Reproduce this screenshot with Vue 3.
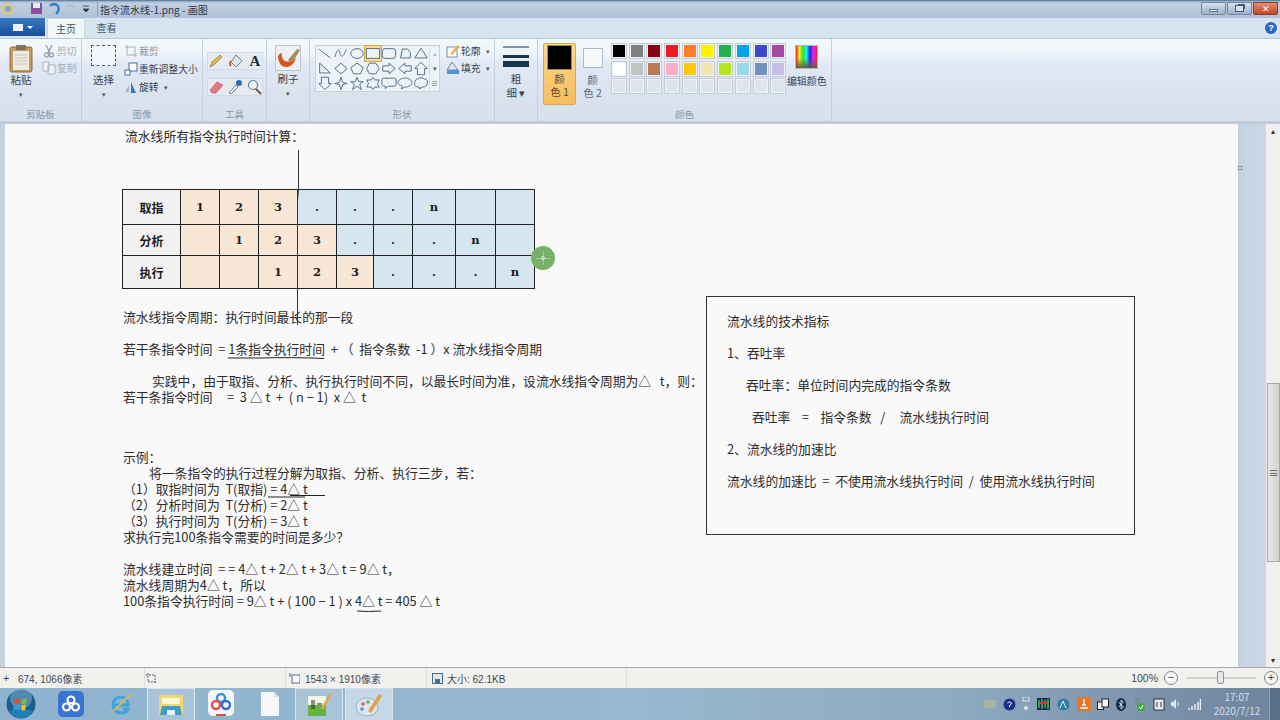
<script setup>
const palette1 = ['#000000','#7f7f7f','#880015','#ed1c24','#ff7f27','#fff200','#22b14c','#00a2e8','#3f48cc','#a349a4']
const palette2 = ['#ffffff','#c3c3c3','#b97a57','#ffaec9','#ffc90e','#efe4b0','#b5e61d','#99d9ea','#7092be','#c8bfe7']
const palette3 = Array(10).fill('#e0e5ec')
const shapes = [
  'M2 3L15 13','M2 12C5 2 7 3 8 8S12 12 15 3','','', '','M4 13L6 3H12L15 7V13Z','M9 2L16 13H2Z',
  'M3 2V13H15Z','M9 2L16 8L9 14L2 8Z','M9 2L16 7L13 14H5L2 7Z','M5 2H12L16 8L12 14H5L2 8Z','M2 5H9V2L16 8L9 14V11H2Z','M16 5H9V2L2 8L9 14V11H16Z','M5 15V8H2L9 1L16 8H13V15Z',
  'M5 1V8H2L9 15L16 8H13V1H5Z','M9 1L11 7L16 8L11 9L9 15L7 9L2 8L7 7Z','M9 1L11 6H16L12 9L14 15L9 11L4 15L6 9L2 6H7Z','M9 1L11 4H16L14 8L16 12H11L9 15L7 12H2L4 8L2 4H7Z','M3 2H15Q17 2 17 4V9Q17 11 15 11H8L5 14V11H3Q1 11 1 9V4Q1 2 3 2Z','M9 2C13 2 17 4 17 7S13 12 9 12L5 14L6 11C3 10 1 9 1 7C1 4 5 2 9 2Z','M5 3C7 1 11 1 13 3C16 3 17 6 16 8C16 11 13 12 11 12L7 14L7 12C3 12 1 10 2 7C2 5 3 3 5 3Z'
]
const cells = [
  {t:'取指',c:'head'},{t:'1',c:'or'},{t:'2',c:'or'},{t:'3',c:'or'},{t:'.',c:'bl'},{t:'.',c:'bl'},{t:'.',c:'bl'},{t:'n',c:'bl'},{t:'',c:'bl'},{t:'',c:'bl'},
  {t:'分析',c:'head'},{t:'',c:'or'},{t:'1',c:'or'},{t:'2',c:'or'},{t:'3',c:'or'},{t:'.',c:'bl'},{t:'.',c:'bl'},{t:'.',c:'bl'},{t:'n',c:'bl'},{t:'',c:'bl'},
  {t:'执行',c:'head'},{t:'',c:'or'},{t:'',c:'or'},{t:'1',c:'or'},{t:'2',c:'or'},{t:'3',c:'or'},{t:'.',c:'bl'},{t:'.',c:'bl'},{t:'.',c:'bl'},{t:'n',c:'bl'}
]
const lines = [
  {t:'流水线指令周期：执行时间最长的那一段'},{t:''},
  {t:'若干条指令时间  = 1条指令执行时间  + （  指令条数  -1 ）x 流水线指令周期'},{t:''},
  {t:'实践中，由于取指、分析、执行执行时间不同，以最长时间为准，设流水线指令周期为△   t，则：',c:'i1'},
  {t:'若干条指令时间     =  3 △ t  +  ( n − 1)  x △  t'},{t:''},{t:''},{t:''},
  {t:'示例：',c:'up'},
  {t:'将一条指令的执行过程分解为取指、分析、执行三步，若：',c:'i2'},
  {t:'（1）取指时间为  T(取指) = 4△ t'},
  {t:'（2）分析时间为  T(分析) = 2△ t'},
  {t:'（3）执行时间为  T(分析) = 3△ t'},
  {t:'求执行完100条指令需要的时间是多少？'},{t:''},
  {t:'流水线建立时间  = = 4△ t + 2△ t + 3△ t = 9△ t，'},
  {t:'流水线周期为4△ t，所以'},
  {t:'100条指令执行时间 = 9△ t + ( 100 − 1 ) x 4△ t = 405 △ t'}
]
const boxLines = [
  {t:'流水线的技术指标'},{t:'1、吞吐率'},{t:'吞吐率：单位时间内完成的指令条数',c:'b1'},
  {t:'吞吐率    =    指令条数   /     流水线执行时间',c:'b2'},{t:'2、流水线的加速比'},
  {t:'流水线的加速比  =  不使用流水线执行时间  /  使用流水线执行时间'}
]
</script>

<template>
  <div class="win">
    <header class="title">
      <svg class="qa" width="92" height="18" viewBox="0 0 92 18">
        <circle cx="6" cy="9" r="6" fill="#d9c98e"/><circle cx="6" cy="9" r="3" fill="#7fa8c9"/>
        <rect x="29" y="3" width="11" height="11" fill="#8a4f9e"/><rect x="31" y="3" width="7" height="5" fill="#e8e8f2"/>
        <path d="M48 6Q52 2 56 6Q58 10 54 14" fill="none" stroke="#2f7fc7" stroke-width="2.4"/>
        <path d="M64 7Q68 3 72 8" fill="none" stroke="#aebccd" stroke-width="2"/>
        <path d="M81 6h6M81 9h6l-3 3z" fill="#2c3a4c" stroke="#2c3a4c" stroke-width=".8"/>
      </svg>
      <span class="sep"></span>
      <span class="title-text">指令流水线-1.png - 画图</span>
      <div class="wbtns">
        <span class="wb"><i class="mn"></i></span>
        <span class="wb"><i class="mx"></i></span>
        <span class="wb close">✕</span>
      </div>
    </header>

    <nav class="tabs">
      <span class="menu-btn"><i></i><b></b></span>
      <span class="tab active">主页</span>
      <span class="tab">查看</span>
      <span class="help">?</span>
    </nav>

    <section class="ribbon">
      <div class="group g-clip">
        <div class="gbody">
          <div class="big">
            <svg width="26" height="30" viewBox="0 0 26 30"><rect x="2" y="4" width="22" height="25" rx="2" fill="#c79a62" stroke="#8a6a44"/><rect x="5" y="8" width="16" height="19" fill="#efeae0"/><path d="M7 12h12M7 15h12M7 18h12M7 21h12" stroke="#c9c5bb"/><rect x="8" y="2" width="10" height="5" rx="1" fill="#7d7468"/></svg>
            <span>粘贴</span><em>▾</em>
          </div>
          <div class="stack dim">
            <div class="row"><svg width="14" height="14" viewBox="0 0 14 14"><path d="M4 1L8 9M10 1L6 9" stroke="#9aa3ad" stroke-width="1.4"/><circle cx="4.500" cy="11" r="2" fill="none" stroke="#9aa3ad" stroke-width="1.300"/><circle cx="9.500" cy="11" r="2" fill="none" stroke="#9aa3ad" stroke-width="1.300"/></svg>剪切</div>
            <div class="row"><svg width="14" height="14" viewBox="0 0 14 14"><path d="M1 1h6v9H1zM6 4h7v9H6z" fill="#eef1f5" stroke="#aab2bc"/></svg>复制</div>
          </div>
        </div>
        <label>剪贴板</label>
      </div>
      <div class="group g-img">
        <div class="gbody">
          <div class="big sel">
            <div class="dash"></div>
            <span>选择</span><em>▾</em>
          </div>
          <div class="stack">
            <div class="row dimr"><svg width="14" height="14" viewBox="0 0 14 14"><path d="M3 1V11H13M1 3H11V13" fill="none" stroke="#a4adb8"/></svg>裁剪</div>
            <div class="row"><svg width="14" height="14" viewBox="0 0 14 14"><rect x="5" y="1" width="8" height="8" fill="#fff" stroke="#3c6ea5"/><rect x="1" y="8" width="5" height="5" fill="#fff" stroke="#3c6ea5"/></svg>重新调整大小</div>
            <div class="row"><svg width="14" height="14" viewBox="0 0 14 14"><path d="M7 2L12 13H7Z" fill="#3c78c0"/><path d="M5 5L1 12H5Z" fill="#a9b9c9"/></svg>旋转<em class="inl">▾</em></div>
          </div>
        </div>
        <label>图像</label>
      </div>
      <div class="group g-tools">
        <div class="gbody toolgrid">
          <div class="tool-row">
            <svg width="16" height="16" viewBox="0 0 16 16"><path d="M2 14L4 9L12 2L14 4L6 12Z" fill="#e5b84d" stroke="#8a7a4c" stroke-width=".7"/></svg>
            <svg width="16" height="16" viewBox="0 0 16 16"><path d="M8 2L14 8L8 14L3 9Z" fill="#dfe6ee" stroke="#6b8096"/><path d="M3 8Q1 11 3 13" stroke="#d2622a" stroke-width="2" fill="none"/></svg>
            <span class="a">A</span>
          </div>
          <div class="tool-row">
            <svg width="16" height="16" viewBox="0 0 16 16"><path d="M2 11L9 3L15 6L8 14H4Z" fill="#e67a84" stroke="#b05a60" stroke-width=".7"/></svg>
            <svg width="16" height="16" viewBox="0 0 16 16"><path d="M2 14L9 6L11 8L4 15Z" fill="#e4eef6" stroke="#4d6f8e" stroke-width=".8"/><circle cx="12" cy="4" r="3" fill="#2f6db0"/></svg>
            <svg width="16" height="16" viewBox="0 0 16 16"><circle cx="7" cy="6" r="4.500" fill="#eef4fa" stroke="#6c7e90" stroke-width="1.200"/><path d="M10 10L15 15" stroke="#6b5a44" stroke-width="2"/></svg>
          </div>
        </div>
        <label>工具</label>
      </div>
      <div class="group g-brush">
        <div class="gbody">
          <div class="big brush">
            <svg width="26" height="26" viewBox="0 0 26 26"><rect x=".5" y=".5" width="25" height="25" fill="#eef0f2" stroke="#bcc5ce"/><path d="M3 12Q4 23 13 22Q19 20 21 13Q16 18 10 16Q6 14 7 8Q3 9 3 12Z" fill="#d8521c"/><path d="M13 15L23 3L25 5L17 18Z" fill="#a98a5c"/><path d="M22 4L24 2L25 4L24 5Z" fill="#dfe6ee"/></svg>
            <span>刷子</span><em>▾</em>
          </div>
        </div>
        <label class="hidden">刷子</label>
      </div>
      <div class="group g-shape">
        <div class="gbody shapes-wrap">
          <div class="gallery">
            <div class="shapes">
              <span v-for="(d,i) in shapes" :key="i" class="shape" :class="{on:i===3}">
                <svg width="16" height="15" viewBox="0 0 18 16">
                  <ellipse v-if="i===2" cx="9" cy="8" rx="7" ry="5.500" fill="none" stroke="#50708e" stroke-width="1.100"/>
                  <rect v-else-if="i===3" x="1.500" y="2.500" width="15" height="11" fill="#eef4fa" stroke="#50708e" stroke-width="1.100"/>
                  <rect v-else-if="i===4" x="1.500" y="2.500" width="15" height="11" rx="3" fill="none" stroke="#50708e" stroke-width="1.100"/>
                  <path v-else :d="d" fill="none" stroke="#50708e" stroke-width="1.100"/>
                </svg>
              </span>
            </div>
            <div class="gscroll"><i>▴</i><i class="d">▾</i><i class="d">≡</i></div>
          </div>
          <div class="stack outl">
            <div class="row"><svg width="14" height="14" viewBox="0 0 14 14"><rect x="1" y="3" width="10" height="10" fill="#fff" stroke="#7a93ab"/><path d="M4 10L12 1L14 3L6 11Z" fill="#e0b04a"/></svg>轮廓<em class="inl">▾</em></div>
            <div class="row"><svg width="14" height="14" viewBox="0 0 14 14"><path d="M6 1L12 9H1Z" fill="#dce7f1" stroke="#6e8aa4"/><path d="M1 9H13V13H1Z" fill="#4d92d1"/></svg>填充<em class="inl">▾</em></div>
          </div>
        </div>
        <label>形状</label>
      </div>
      <div class="group g-size">
        <div class="gbody weights">
          <div class="w-lines"><i class="w1"></i><i class="w2"></i><i class="w3"></i></div>
          <span>粗</span><span>细 ▾</span>
        </div>
        <label class="hidden">粗细</label>
      </div>
      <div class="group g-color">
        <div class="gbody colors">
          <div class="col1"><div class="swatch black"></div><span>颜</span><span>色 1</span></div>
          <div class="col2"><div class="swatch white"></div><span>颜</span><span>色 2</span></div>
          <div class="pal">
            <span v-for="(c,i) in palette1.concat(palette2,palette3)" :key="i" class="chip"><i :style="{background:c}"></i></span>
          </div>
          <div class="edit">
            <div class="rainbow"></div>
            <span>编辑颜色</span>
          </div>
        </div>
        <label>颜色</label>
      </div>
      <div class="group g-fill"></div>
    </section>

    <main class="work">
      <div class="gutter"></div>
      <div class="doc">
        <div class="left">
          <div class="ln first">流水线所有指令执行时间计算：</div>
          <div class="tbl">
            <span v-for="(c,i) in cells" :key="i" class="cell" :class="c.c">{{ c.t }}</span>
          </div>
          <div class="lines">
            <div v-for="(l,i) in lines" :key="i" class="ln" :class="l.c">{{ l.t }}</div>
          </div>
        </div>
        <aside class="box">
          <div v-for="(l,i) in boxLines" :key="i" class="ln bl-line" :class="l.c">{{ l.t }}</div>
        </aside>
        <svg class="ink" width="1233" height="544" viewBox="5 124 1233 544">
          <path d="M298.500 150V190L297.500 200V325" fill="none" stroke="#333" stroke-width="1"/>
          <path d="M228 358H262Q290 357 324 358.500M268 497H305M290 495.500H325M357 611Q368 612 381 611" fill="none" stroke="#222" stroke-width="1"/>
        </svg>
        <div class="cursor"><i></i><b></b><u></u></div>
      </div>
      <div class="band"><i class="grip"></i></div>
      <div class="scroll">
        <em>▴</em>
        <div class="thumb"><span>≡</span></div>
        <em class="down">▾</em>
      </div>
    </main>

    <footer class="status">
      <div class="st s1"><span class="plus">+</span>674, 1066像素</div>
      <div class="st s2"><svg width="11" height="11" viewBox="0 0 11 11"><path d="M2 0V9H11M0 2H9V11" fill="none" stroke="#56677a" stroke-dasharray="2 1"/></svg></div>
      <div class="st s3"><svg width="11" height="11" viewBox="0 0 11 11"><rect x="3" y="2" width="8" height="8" fill="#fff" stroke="#4b6d8e"/><path d="M1 0V4" stroke="#4b6d8e"/></svg>1543 × 1910像素</div>
      <div class="st s4"><svg width="11" height="11" viewBox="0 0 11 11"><rect x=".5" y=".5" width="10" height="10" fill="#dce7f1" stroke="#4b6d8e"/><rect x="3" y="6" width="5" height="4" fill="#4b6d8e"/></svg>大小: 62.1KB</div>
      <div class="zoomer">
        <span class="pct">100%</span>
        <span class="round">−</span>
        <div class="track"><i></i></div>
        <span class="round">+</span>
      </div>
    </footer>

    <div class="taskbar">
      <div class="start"><svg width="30" height="30" viewBox="0 0 30 30"><circle cx="15" cy="15" r="14.500" fill="#1e5c8c"/><circle cx="15" cy="9" r="11" fill="#8ac0dc" opacity=".45"/><path d="M15 29A14 14 0 0 0 27 22Q15 18 3 22A14 14 0 0 0 15 29Z" fill="#1f8fc9" opacity=".7"/><path d="M9 10Q11 9 14 10V15Q11 14 8 15Z" fill="#e2522a"/><path d="M15.500 10Q18 11 21 9L20 14Q18 16 15.500 15Z" fill="#7ebd3e"/><path d="M8 16Q11 15 14 16V21Q11 20 7 21Z" fill="#3f9fdc"/><path d="M15.500 16Q18 17 20 15L19 21Q17 22 15.500 21Z" fill="#f4c32c"/></svg></div>
      <div class="tk"><svg width="26" height="26" viewBox="0 0 26 26"><rect width="26" height="26" rx="5" fill="#3a74d2"/><circle cx="13" cy="9" r="3.500" fill="none" stroke="#fff" stroke-width="2.200"/><circle cx="8.500" cy="16" r="3.500" fill="none" stroke="#fff" stroke-width="2.200"/><circle cx="17.500" cy="16" r="3.500" fill="none" stroke="#fff" stroke-width="2.200"/></svg></div>
      <div class="tk"><svg width="26" height="26" viewBox="0 0 26 26"><path d="M6 14H20C20 8 16 6 13 6C8 6 5 10 5 14C5 19 9 22 13 22C16 22 19 21 20 18H15" fill="none" stroke="#3aa6e0" stroke-width="3"/><path d="M3 22C7 19 19 6 24 3" fill="none" stroke="#e8b93a" stroke-width="1.500"/></svg></div>
      <div class="tk act"><svg width="28" height="26" viewBox="0 0 28 26"><rect x="2" y="3" width="24" height="20" fill="#f3d774"/><rect x="5" y="6" width="18" height="6" fill="#fff7d0"/><path d="M5 14H23L25 23H3Z" fill="#3c9cc7"/><rect x="10" y="18" width="8" height="5" fill="#e9f1f6"/></svg></div>
      <div class="tk"><svg width="26" height="28" viewBox="0 0 26 28"><rect width="26" height="26" rx="5" fill="#f5f8fb"/><circle cx="13" cy="8" r="4" fill="none" stroke="#3b8fdc" stroke-width="2.400"/><circle cx="8" cy="15" r="4" fill="none" stroke="#e24e4e" stroke-width="2.400"/><circle cx="18" cy="15" r="4" fill="none" stroke="#2f6fd0" stroke-width="2.400"/><rect x="8" y="24" width="10" height="2" fill="#e24e4e"/></svg></div>
      <div class="tk file"><svg width="20" height="26" viewBox="0 0 20 26"><path d="M1 1H14L19 6V25H1Z" fill="#f6f7f8"/><path d="M14 1V6H19" fill="#d8dde2"/></svg></div>
      <div class="tk act"><svg width="26" height="26" viewBox="0 0 26 26"><rect x="2" y="4" width="18" height="20" fill="#f2f6ea"/><rect x="2" y="13" width="18" height="11" fill="#65b33e"/><path d="M6 8V17M8 8V17M11 12H16" stroke="#222"/><path d="M15 16L24 1L26 2L17 18Z" fill="#e2a93b"/></svg></div>
      <div class="tk act light"><svg width="28" height="26" viewBox="0 0 28 26"><ellipse cx="12" cy="15" rx="11" ry="9" fill="#dbe6ee" stroke="#9fb2c2"/><circle cx="8" cy="12" r="1.800" fill="#e25a5a"/><circle cx="13" cy="10" r="1.800" fill="#62b16a"/><circle cx="7" cy="17" r="1.800" fill="#4d92d1"/><path d="M13 19L24 2L27 4L16 21Z" fill="#dfa143"/></svg></div>
      <div class="tray">
        <svg width="12" height="8" viewBox="0 0 12 8"><rect width="12" height="8" fill="#a7b3a8"/></svg>
        <svg width="13" height="13" viewBox="0 0 13 13"><circle cx="6.500" cy="6.500" r="6" fill="#1e2e8c"/><path d="M4.500 5Q6.500 2.500 8.500 5Q8 7 6.500 7.500V9" fill="none" stroke="#fff"/></svg>
        <svg width="8" height="14" viewBox="0 0 8 14"><rect x="1" y="0" width="6" height="4" fill="none" stroke="#dfe6ec"/><circle cx="4" cy="11" r="2" fill="#dfe6ec"/></svg>
        <svg width="13" height="12" viewBox="0 0 13 12"><rect width="13" height="12" fill="#1a2a4a"/><path d="M2 2V10M5 1V11M8 2V10M11 1V11" stroke="#3fbf5f" stroke-width="1.500"/><path d="M3 5H10" stroke="#d33" stroke-width="2"/></svg>
        <svg width="13" height="13" viewBox="0 0 13 13"><circle cx="6.500" cy="6.500" r="6" fill="#2c7ea6"/><path d="M3 10L6 3L9 10" fill="none" stroke="#e6f3fa"/></svg>
        <svg width="14" height="14" viewBox="0 0 14 14"><rect width="14" height="14" fill="#e4762a"/><path d="M3 11H11M5 8H9M7 2V8" stroke="#fff" stroke-width="1.300"/></svg>
        <svg width="12" height="12" viewBox="0 0 12 12"><rect x="0.500" y="4" width="6" height="7.500" fill="#f1f4f6" stroke="#222"/><rect x="5" y="1" width="6.500" height="8" fill="#f1f4f6" stroke="#222"/></svg>
        <svg width="10" height="13" viewBox="0 0 10 13"><ellipse cx="5" cy="6.500" rx="5" ry="6.500" fill="#12264e"/><path d="M2.500 4L7.500 9L5 11V2L7.500 4L2.500 9" fill="none" stroke="#fff" stroke-width=".8"/></svg>
        <svg width="13" height="13" viewBox="0 0 13 13"><rect x="2" y="0" width="4" height="8" rx="1" fill="#7d8b98"/><circle cx="8" cy="9" r="4" fill="#3fa83f"/><path d="M6 9L8 11L10 7" fill="none" stroke="#fff"/></svg>
        <svg width="12" height="13" viewBox="0 0 12 13"><rect x="1" y="1" width="10" height="11" fill="#e6edf2" stroke="#333"/><path d="M4 4V9M8 4V9" stroke="#333"/></svg>
        <svg width="10" height="12" viewBox="0 0 10 12"><path d="M0 4H2L5 1V11L2 8H0Z" fill="#dfe6ec"/><path d="M7 4Q8 6 7 8" fill="none" stroke="#dfe6ec"/></svg>
        <svg width="13" height="11" viewBox="0 0 13 11"><path d="M1 11V9M4 11V7M7 11V5M10 11V3M12.500 11V0" stroke="#eef2f6" stroke-width="1.500"/></svg>
      </div>
      <div class="clock"><span>17:07</span><span>2020/7/12</span></div>
      <div class="desk"></div>
    </div>
  </div>
</template>

<style>
html, body { margin: 0; padding: 0; background: #f8f8f8; }
</style>

<style scoped>
.win { width: 1280px; height: 720px; overflow: hidden; display: flex; flex-direction: column; font-family: "Noto Sans CJK SC", "Liberation Sans", sans-serif; color: #333; }
.title { height: 18px; flex: none; display: flex; align-items: center; padding-left: 2px; box-sizing: border-box; background: linear-gradient(#40607f 0, #8ba5c2 1px, #c0cfe2 3px, #afc1d8 100%); position: relative; }
.qa { flex: none; }
.sep { width: 1px; height: 14px; background: #8b9cb0; margin: 0 2px 0 3px; }
.title-text { font-size: 10px; color: #2b3644; }
.wbtns { margin-left: auto; display: flex; gap: 1px; margin-right: 2px; align-self: flex-start; margin-top: 2px; }
.wb { width: 25px; height: 13px; border: 1px solid #73869b; box-sizing: border-box; border-radius: 0 0 2px 2px; background: linear-gradient(#d3e0ec, #9db2c8); display: flex; align-items: center; justify-content: center; }
.wb.close { background: linear-gradient(#e88e6e, #c1452c); color: #fff; font-size: 9px; border-color: #7c4030; }
.mn { width: 9px; height: 3px; background: #f1f4f8; border: 1px solid #5d6f82; box-sizing: border-box; margin-top: 3px; }
.mx { width: 9px; height: 7px; border: 1px solid #46586a; box-sizing: border-box; box-shadow: 2px -2px 0 -1px #46586a; background: #d7e1ec; }
.tabs { height: 20px; flex: none; display: flex; align-items: flex-end; background: #d5e4ef; position: relative; }
.menu-btn { width: 45px; height: 18px; margin-right: 2px; background: linear-gradient(#3a7bc0, #164f9c); display: flex; align-items: center; justify-content: center; gap: 4px; align-self: flex-start; }
.menu-btn i { width: 10px; height: 7px; background: #eef3f8; }
.menu-btn b { width: 0; height: 0; border: 3px solid transparent; border-top-color: #fff; margin-top: 3px; }
.tab { width: 37px; height: 20px; line-height: 20px; text-align: center; font-size: 10px; color: #40566c; margin-right: 3px; box-sizing: border-box; }
.tab.active { width: 38px; background: #f1f7f9; color: #3a4e5a; border: 1px solid #c8d6e0; border-bottom: 0; line-height: 19px; }
.help { position: absolute; right: 3px; top: 4px; width: 12px; height: 12px; border-radius: 50%; background: #2f66c4; color: #fff; font: bold 9px/12px "Liberation Sans", sans-serif; text-align: center; }
.ribbon { height: 86px; flex: none; display: flex; box-sizing: border-box; background: linear-gradient(#f2f9fa 0, #eef4fa 15px, #e1e8f6 25px, #d7e2ec 65px, #d8e2ef 100%); border-top: 1px solid #b9c8d4; border-bottom: 3px solid #c2ccd8; }
.group { position: relative; display: flex; flex-direction: column; box-sizing: border-box; border-right: 1px solid #c3d0df; font-size: 10px; color: #39434f; }
.group label { height: 13px; line-height: 13px; text-align: center; font-size: 9.500px; color: #8796a6; flex: none; }
.group label.hidden { visibility: hidden; }
.gbody { flex: 1; display: flex; min-height: 0; }
.g-clip { width: 82px; } .g-img { width: 121px; } .g-tools { width: 64px; } .g-brush { width: 43px; } .g-shape { width: 185px; } .g-size { width: 43px; } .g-color { width: 294px; } .g-fill { flex: 1; border-right: 0; }
.big { display: flex; flex-direction: column; align-items: center; line-height: 14px; font-size: 10.500px; }
.big em { font-size: 7px; font-style: normal; color: #555; line-height: 10px; margin-top: 2px; }
.g-clip .big { width: 42px; padding-top: 4px; }
.stack { display: flex; flex-direction: column; gap: 3px; padding-top: 5px; }
.stack .row { display: flex; align-items: center; gap: 1px; height: 14px; line-height: 14px; white-space: nowrap; font-size: 9.800px; }
.g-img .stack { gap: 4px; }
.dim { color: #a6aeb8; }
.dimr { color: #8c98a6; }
.inl { font-style: normal; font-size: 7px; color: #555; margin-left: 4px; }
.g-img .big { width: 42px; padding: 6px 0 0 1px; box-sizing: border-box; }
.dash { width: 23px; height: 19px; border: 1px dashed #4b5d70; background: #f3f7fb; margin-bottom: 7px; }
.toolgrid { flex-direction: column; gap: 10px; padding: 14px 0 0 5px; }
.tool-row { width: 54px; height: 16px; display: flex; justify-content: space-between; background: #e6ebf3; outline: 1px solid #d2dae4; }
.a { font: bold 15px/16px "Liberation Serif", serif; color: #1d2a38; width: 14px; text-align: center; }
.g-brush .big { width: 43px; padding-top: 6px; }
.g-brush .big span { margin-top: 1px; }
.shapes-wrap { padding: 6px 0 0 5px; gap: 6px; }
.gallery { width: 125px; height: 47px; display: flex; border: 1px solid #c6d1dd; box-sizing: border-box; background: #eef3f9; }
.shapes { flex: 1; display: grid; grid-template-columns: repeat(7, 16px); grid-auto-rows: 15px; align-content: center; justify-content: center; }
.shape { display: flex; align-items: center; justify-content: center; width: 16px; height: 15px; box-sizing: border-box; }
.shape.on { outline: 1px solid #d9a83f; background: #fbdc95; }
.gscroll { width: 9px; display: flex; flex-direction: column; border-left: 1px solid #d6dee7; }
.gscroll i { flex: 1; font-size: 7px; line-height: 15px; text-align: center; font-style: normal; color: #b5bdc7; }
.gscroll i.d { color: #4c5a68; }
.outl { gap: 3px; padding-top: 0; margin-top: -1px; }
.weights { flex-direction: column; align-items: center; font-size: 10.500px; line-height: 14px; padding-top: 7px; }
.w-lines { width: 26px; display: flex; flex-direction: column; margin-bottom: 5px; }
.w-lines i { background: #17354f; }
.w1 { height: 2px; background: #7c95a6 !important; margin-bottom: 7px; }
.w2 { height: 3px; margin-bottom: 3px; }
.w3 { height: 6px; }
.colors { padding: 4px 0 0 5px; }
.col1 { width: 33px; height: 62px; background: linear-gradient(#fbd88a, #f7bd5e); border: 1px solid #d7a957; box-sizing: border-box; border-radius: 2px; display: flex; flex-direction: column; align-items: center; font-size: 10.500px; line-height: 13px; color: #5b4a2c; }
.swatch { box-sizing: border-box; flex: none; }
.black { width: 23px; height: 23px; background: #000; margin: 2px 0 3px; outline: 1px solid #a08a5c; }
.col2 { width: 33px; display: flex; flex-direction: column; align-items: center; font-size: 10.500px; line-height: 13px; color: #5a6a7a; }
.white { width: 20px; height: 20px; background: #f8f8fa; border: 1px solid #b0bac6; margin: 5px 0 5px; }
.pal { margin-left: 2px; display: grid; grid-template-columns: repeat(10, 17.700px); grid-auto-rows: 17.500px; height: 54px; }
.chip { width: 16px; height: 16px; border: 1px solid #c5ced8; box-sizing: border-box; padding: 1px; background: #eef2f6; }
.chip i { display: block; width: 100%; height: 100%; }
.edit { margin-left: -4px; width: 46px; display: flex; flex-direction: column; align-items: center; font-size: 10px; white-space: nowrap; line-height: 14px; }
.rainbow { width: 21px; height: 22px; border: 1px solid #b0b8c0; margin: 2px 0 5px; background: linear-gradient(#8b6a6a00 55%, #6b5a44 100%), linear-gradient(90deg, #e22, #ee2, #2e2, #2ee, #22e, #e2e, #e22); }
.work { flex: 1; min-height: 0; display: flex; border-bottom: 1px solid #a5a8ab; }
.gutter { width: 5px; flex: none; background: #c6d4e1; }
.doc { width: 1233px; flex: none; position: relative; display: flex; background: #f9f9f9; box-sizing: border-box; padding-left: 118px; }
.left { width: 583px; flex: none; }
.ln { height: 16px; line-height: 16px; font-size: 12.800px; color: #2c2c2c; white-space: pre; }
.first { margin-top: 4px; margin-left: 2px; }
.tbl { margin-top: 45px; margin-left: -1px; width: 413px; height: 100px; display: grid; grid-template-columns: 58px 39px 39px 39px 39px 37px 39px 43px 40px 39px; grid-template-rows: 35px 31px 33px; border-top: 1px solid #222; border-left: 1px solid #222; box-sizing: border-box; }
.cell { border-right: 1px solid #222; border-bottom: 1px solid #222; display: flex; align-items: center; justify-content: center; font: bold 11.500px "DejaVu Serif", serif; color: #1c1c1c; }
.cell.head { background: #f1f1f1; font: bold 12px "Noto Sans CJK SC", sans-serif; }
.cell.or { background: #f8e7d7; }
.cell.bl { background: #d6e6f1; }
.lines { margin-top: 20px; }
.i1 { padding-left: 29px; }
.i2 { padding-left: 26px; }
.up { margin-top: -4px; }
.box { width: 429px; height: 239px; margin-top: 172px; box-sizing: border-box; border: 1px solid #333; padding: 16px 0 0 20px; background: #f9f9f9; flex: none; }
.bl-line { margin-bottom: 16px; }
.b1 { padding-left: 19px; }
.b2 { padding-left: 25px; }
.ink { position: absolute; left: 0; top: 0; pointer-events: none; }
.cursor { position: absolute; left: 526px; top: 122px; width: 24px; height: 24px; border-radius: 50%; background: #78b06a; }
.cursor i { position: absolute; left: 11.500px; top: 5px; width: 1px; height: 14px; background: #a9cba0; }
.cursor b { position: absolute; top: 11.500px; left: 5px; height: 1px; width: 14px; background: #a9cba0; }
.cursor u { position: absolute; left: 10px; top: 10px; width: 2px; height: 2px; border: 1px solid #dfe8da; border-radius: 50%; }
.band { width: 28px; flex: none; position: relative; background: linear-gradient(90deg, #c1d0e0 0, #c5d5e2 6px, #cad7e6 100%); }
.grip { position: absolute; left: 0; top: 42px; width: 4px; height: 4px; background: #f3f5f7; border: 1px solid #7f8a96; box-sizing: border-box; }
.scroll { width: 14px; flex: none; background: #f0f0ee; position: relative; display: flex; flex-direction: column; align-items: center; }
.scroll em { font-style: normal; font-size: 8px; line-height: 14px; color: #333; }
.scroll em.down { margin-top: auto; }
.thumb { position: absolute; left: 1px; right: 0; top: 259px; height: 179px; background: linear-gradient(90deg, #e7e7e7, #d2d2d2); border: 1px solid #a8a8a8; box-sizing: border-box; display: flex; align-items: center; justify-content: center; font-size: 10px; color: #555; }
.status { height: 20px; flex: none; display: flex; align-items: center; background: #f2f1ee; font-family: "Liberation Sans", "Noto Sans CJK SC", sans-serif; font-size: 10px; color: #3d4a58; box-sizing: border-box; }
.st { height: 100%; display: flex; align-items: center; gap: 6px; box-sizing: border-box; border-right: 1px solid #e0dfdc; white-space: nowrap; }
.s1 { width: 145px; padding-left: 3px; }
.plus { font-size: 11px; width: 9px; }
.s2 { width: 141px; padding-left: 1px; }
.s3 { width: 141px; padding-left: 3px; gap: 5px; }
.s4 { width: 200px; padding-left: 5px; gap: 4px; }
.zoomer { margin-left: auto; display: flex; align-items: center; height: 100%; padding-right: 2px; }
.pct { margin-right: 6px; font-size: 10.500px; }
.round { width: 12px; height: 12px; line-height: 11px; border: 1px solid #7c8793; border-radius: 50%; font-size: 11px; text-align: center; color: #3a4652; background: #f6f6f4; }
.track { width: 70px; height: 2px; background: #cfd0cf; margin: 0 8px; position: relative; }
.track i { position: absolute; left: 31px; top: -6px; width: 7px; height: 13px; background: #e6e8ea; border: 1px solid #8a949e; border-radius: 2px; box-sizing: border-box; }
.taskbar { height: 32px; flex: none; display: flex; align-items: center; background: linear-gradient(90deg, #8fb3cf 0, #97b8d0 50%, #8ea9c1 75%, #6f849c 100%); position: relative; }
.start { width: 47px; display: flex; padding-left: 6px; box-sizing: border-box; }
.tk { width: 48px; margin-right: 2px; height: 32px; box-sizing: border-box; display: flex; align-items: center; justify-content: center; }
.tk.file { width: 46px; }
.tk.act { background: #a9c4d8; border: 1px solid #dbe6ee; border-bottom: 0; border-top-color: #d4e0ea; }
.tk.act.light { background: #c6d8e6; }
.tray { margin-left: auto; display: flex; align-items: center; gap: 6.750px; margin-right: 11px; }
.clock { width: 50px; display: flex; flex-direction: column; align-items: center; font-size: 10px; line-height: 14px; color: #d5dfe9; white-space: nowrap; }
.desk { width: 11px; height: 32px; margin-left: 7px; background: #5a6f84; border-left: 1px solid #8a9db0; box-sizing: border-box; }
</style>
